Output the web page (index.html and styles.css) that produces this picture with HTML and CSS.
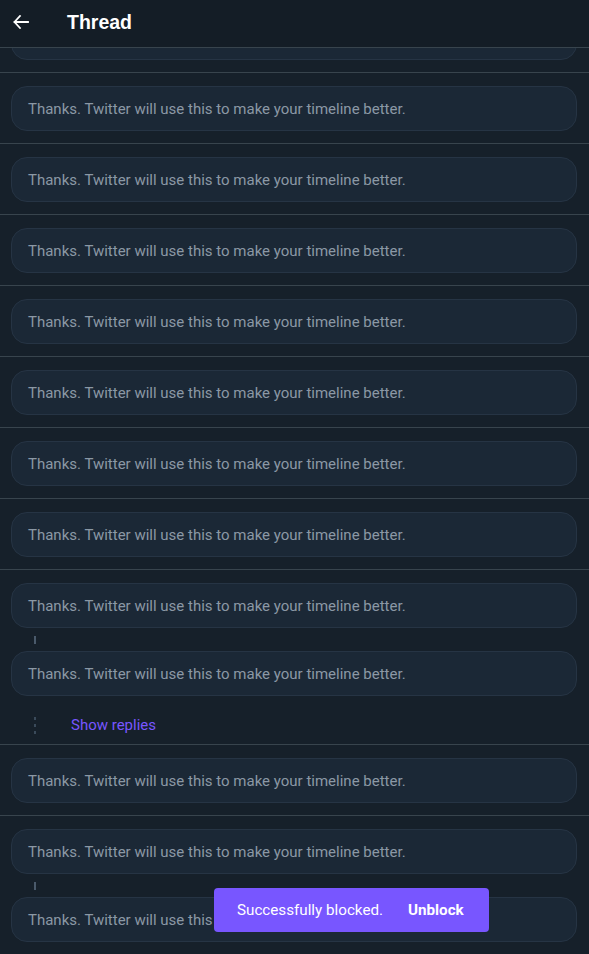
FILE: index.html
```html
<!DOCTYPE html>
<html>
<head>
<meta charset="utf-8">
<link rel="stylesheet" href="styles.css">
</head>
<body>
<div class="page">
  <header class="header">
    <button class="back" aria-label="Back">
      <svg width="16" height="14" viewBox="0 0 16 14"><path d="M7 1 L1.5 7 L7 13 M1.5 7 H15" fill="none" stroke="#ffffff" stroke-width="1.8" stroke-linecap="square"/></svg>
    </button>
    <h1 class="title">Thread</h1>
  </header>
  <div class="clip"><div class="card">Thanks. Twitter will use this to make your timeline better.</div></div>
  <div class="row"><div class="card">Thanks. Twitter will use this to make your timeline better.</div></div>
  <div class="row"><div class="card">Thanks. Twitter will use this to make your timeline better.</div></div>
  <div class="row"><div class="card">Thanks. Twitter will use this to make your timeline better.</div></div>
  <div class="row"><div class="card">Thanks. Twitter will use this to make your timeline better.</div></div>
  <div class="row"><div class="card">Thanks. Twitter will use this to make your timeline better.</div></div>
  <div class="row"><div class="card">Thanks. Twitter will use this to make your timeline better.</div></div>
  <div class="row"><div class="card">Thanks. Twitter will use this to make your timeline better.</div></div>
  <div class="row thread">
    <div class="card">Thanks. Twitter will use this to make your timeline better.</div>
    <div class="connector"><span class="line"></span></div>
    <div class="card">Thanks. Twitter will use this to make your timeline better.</div>
    <div class="more">
      <span class="dots"><i></i><i></i><i></i></span>
      <span class="show">Show replies</span>
    </div>
  </div>
  <div class="row"><div class="card">Thanks. Twitter will use this to make your timeline better.</div></div>
  <div class="row thread last">
    <div class="card">Thanks. Twitter will use this to make your timeline better.</div>
    <div class="connector"><span class="line"></span></div>
    <div class="card">Thanks. Twitter will use this to make your timeline better.</div>
  </div>
  <div class="toast">
    <span class="toast-msg">Successfully blocked.</span>
    <span class="toast-action">Unblock</span>
  </div>
</div>
</body>
</html>
```
FILE: styles.css
```css
html, body {
  margin: 0;
  padding: 0;
  background: #16202a;
}
.page {
  width: 589px;
  height: 954px;
  overflow: hidden;
  position: relative;
  font-family: Roboto, "Noto Sans", sans-serif;
  background: #16202a;
}
.header {
  height: 47px;
  border-bottom: 1px solid #38444d;
  background: #141d26;
  display: flex;
  align-items: center;
}
.back {
  background: none;
  border: 0;
  padding: 0;
  margin-left: 13px;
  width: 16px;
  height: 14px;
  display: flex;
  margin-top: -4px;
}
.title {
  margin: -3px 0 0 38px;
  color: #ffffff;
  font-family: "Liberation Sans", Arial, sans-serif;
  font-weight: 700;
  font-size: 19.5px;
  line-height: 24px;
}
.clip {
  height: 12px;
  overflow: hidden;
  padding: 0 12px 12px 11px;
  border-bottom: 1px solid #38444d;
  display: flex;
  flex-direction: column;
  justify-content: flex-end;
}
.clip .card {
  flex: none;
}
.row {
  padding: 13px 12px 12px 11px;
  border-bottom: 1px solid #38444d;
}
.row.last {
  border-bottom: 0;
}
.card {
  height: 45px;
  box-sizing: border-box;
  border: 1px solid #263444;
  border-radius: 16px;
  background: #1b2836;
  color: #8b98a5;
  font-size: 15px;
  display: flex;
  align-items: center;
  padding: 0 16px;
  white-space: nowrap;
}
.connector {
  height: 23px;
  display: flex;
  align-items: center;
  padding-left: 23px;
}
.line {
  width: 2px;
  height: 8px;
  background: #4a5a6b;
}
.more {
  height: 48px;
  box-sizing: border-box;
  padding-top: 10px;
  display: flex;
  align-items: center;
  margin-bottom: -12px;
}
.dots {
  width: 2px;
  margin-left: 23px;
  display: flex;
  flex-direction: column;
  gap: 4px;
}
.dots i {
  display: block;
  width: 2px;
  height: 3px;
  background: #3a4a5a;
}
.show {
  margin-left: 35px;
  color: #7856ff;
  font-size: 15px;
}
.toast {
  position: absolute;
  left: 214px;
  bottom: 22px;
  width: 275px;
  height: 44px;
  box-sizing: border-box;
  background: #7856ff;
  border-radius: 4px;
  display: flex;
  align-items: center;
  padding-left: 23px;
  color: #ffffff;
  font-size: 15.2px;
}
.toast-action {
  margin-left: 25px;
  font-weight: 700;
}
```
